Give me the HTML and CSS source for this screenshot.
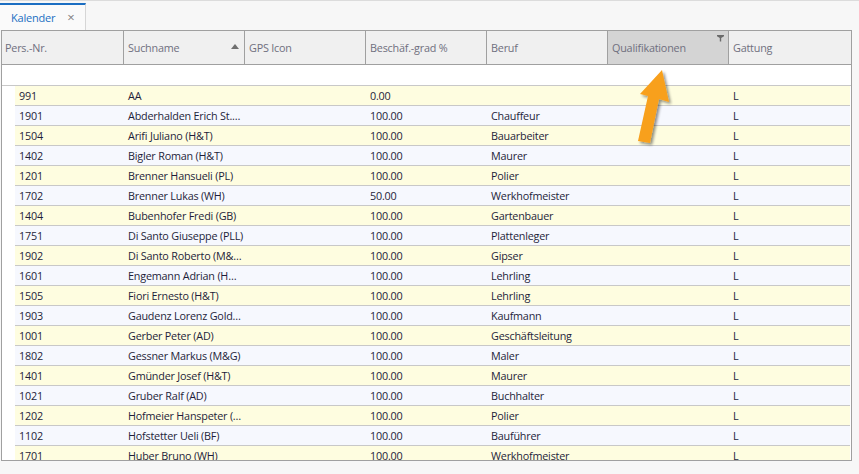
FILE: index.html
```html
<!DOCTYPE html>
<html lang="de">
<head>
<meta charset="utf-8">
<title>Kalender</title>
<link rel="stylesheet" href="styles.css">
</head>
<body>
<div class="page">
  <div class="tabbar">
    <div class="tab"><span class="tab-title">Kalender</span><span class="tab-close">×</span></div>
  </div>
  <div class="grid">
    <div class="header">
      <div class="hcell c1">Pers.-Nr.</div>
      <div class="hcell">Suchname<span class="sort"></span></div>
      <div class="hcell">GPS Icon</div>
      <div class="hcell">Beschäf.-grad %</div>
      <div class="hcell">Beruf</div>
      <div class="hcell active">Qualifikationen<svg class="funnel" width="7" height="7" viewBox="0 0 7 7"><path d="M0 0H7V1.3L4.2 3V6.5H2.8V3L0 1.3Z" fill="#6a6a6a"/></svg></div>
      <div class="hcell last">Gattung</div>
    </div>
    <div class="filter-row"></div>
    <div class="rows" id="rows"></div>
  </div>
  <svg class="arrow" width="859" height="474" viewBox="0 0 859 474">
    <defs>
      <filter id="sh" x="-50%" y="-50%" width="200%" height="200%">
        <feGaussianBlur in="SourceAlpha" stdDeviation="1.6"/>
        <feOffset dx="1.5" dy="2" result="b"/>
        <feComponentTransfer><feFuncA type="linear" slope="0.45"/></feComponentTransfer>
        <feMerge><feMergeNode/><feMergeNode in="SourceGraphic"/></feMerge>
      </filter>
    </defs>
    <polygon filter="url(#sh)" fill="#f8a01c" points="662,70 669,102 659,99 650,143 638,141 648,96 640,94"/>
  </svg>
</div>
<script>
const data = [
["991","AA","0.00","","L"],
["1901","Abderhalden Erich St.…","100.00","Chauffeur","L"],
["1504","Arifi Juliano (H&T)","100.00","Bauarbeiter","L"],
["1402","Bigler Roman (H&T)","100.00","Maurer","L"],
["1201","Brenner Hansueli (PL)","100.00","Polier","L"],
["1702","Brenner Lukas (WH)","50.00","Werkhofmeister","L"],
["1404","Bubenhofer Fredi (GB)","100.00","Gartenbauer","L"],
["1751","Di Santo Giuseppe (PLL)","100.00","Plattenleger","L"],
["1902","Di Santo Roberto (M&…","100.00","Gipser","L"],
["1601","Engemann Adrian (H…","100.00","Lehrling","L"],
["1505","Fiori Ernesto (H&T)","100.00","Lehrling","L"],
["1903","Gaudenz Lorenz Gold…","100.00","Kaufmann","L"],
["1001","Gerber Peter (AD)","100.00","Geschäftsleitung","L"],
["1802","Gessner Markus (M&G)","100.00","Maler","L"],
["1401","Gmünder Josef (H&T)","100.00","Maurer","L"],
["1021","Gruber Ralf (AD)","100.00","Buchhalter","L"],
["1202","Hofmeier Hanspeter (…","100.00","Polier","L"],
["1102","Hofstetter Ueli (BF)","100.00","Bauführer","L"],
["1701","Huber Bruno (WH)","100.00","Werkhofmeister","L"]
];
const rows = document.getElementById('rows');
data.forEach((r, i) => {
  const row = document.createElement('div');
  row.className = 'row ' + (i % 2 === 0 ? 'odd' : 'even');
  const cells = [r[0], r[1], '', r[2], r[3], '', r[4]];
  row.innerHTML = '<div class="ind"></div>' + cells.map((c, j) => '<div class="cell' + (j === 0 ? ' c1' : '') + '">' + c.replace(/&/g,'&amp;') + '</div>').join('');
  rows.appendChild(row);
});
</script>
</body>
</html>
```
FILE: styles.css
```css
* { box-sizing: border-box; }
html, body { margin: 0; padding: 0; }
body {
  background: #f7f7f7;
  font-family: "Open Sans", "Noto Sans", sans-serif;
  font-size: 10.8px;
  letter-spacing: -0.2px;
  width: 859px;
  height: 474px;
  overflow: hidden;
}
.page { position: relative; width: 859px; height: 474px; }
.tabbar {
  height: 30px;
  border-top: 1px solid #dcdcdc;
  padding-top: 2px;
  display: flex;
}
.tab {
  width: 86px;
  height: 27px;
  border-top: 2px solid #1b6ec2;
  border-right: 1px solid #d6d6d6;
  background: #fafafa;
  display: flex;
  align-items: center;
  padding-left: 11px;
  padding-bottom: 1px;
}
.tab-title { color: #1b6ec2; font-size: 11px; }
.tab-close { color: #808080; margin-left: 12px; font-size: 13px; line-height: 1; }
.grid {
  margin-left: 1px;
  width: 851px;
  height: 431px;
  border: 1px solid #a0a0a0;
  background: #ffffff;
  overflow: hidden;
}
.header {
  display: flex;
  height: 34px;
  background: #f0f0f0;
  border-bottom: 1px solid #a0a0a0;
}
.hcell {
  position: relative;
  width: 121px;
  flex: none;
  border-right: 1px solid #a0a0a0;
  color: #6f6f7e;
  display: flex;
  align-items: center;
  padding-left: 4px;
  padding-bottom: 1px;
  white-space: nowrap;
}
.hcell.c1 { width: 122px; padding-left: 3px; }
.hcell.last { border-right: none; }
.hcell.active { background: #d4d4d4; }
.sort {
  position: absolute;
  right: 5px;
  top: 13px;
  width: 0; height: 0;
  border-left: 4.5px solid transparent;
  border-right: 4.5px solid transparent;
  border-bottom: 5px solid #707070;
}
.funnel { position: absolute; right: 4px; top: 4px; }
.filter-row {
  height: 21px;
  border-bottom: 1px solid #c8c8c8;
  background: #fff;
}
.row {
  display: flex;
  height: 20px;
}
.ind { width: 13px; flex: none; background: #fff; }
.row .cell {
  width: 121px;
  flex: none;
  padding-left: 4px;
  padding-bottom: 1px;
  color: #1e1e3a;
  display: flex;
  align-items: center;
  white-space: nowrap;
  border-bottom: 1px solid #c8c8c8;
}
.row .cell.c1 { width: 109px; }
.row.odd .cell { background: #fefde0; }
.row.even .cell { background: #f6f8fe; }
.arrow { position: absolute; left: 0; top: 0; pointer-events: none; }
```
